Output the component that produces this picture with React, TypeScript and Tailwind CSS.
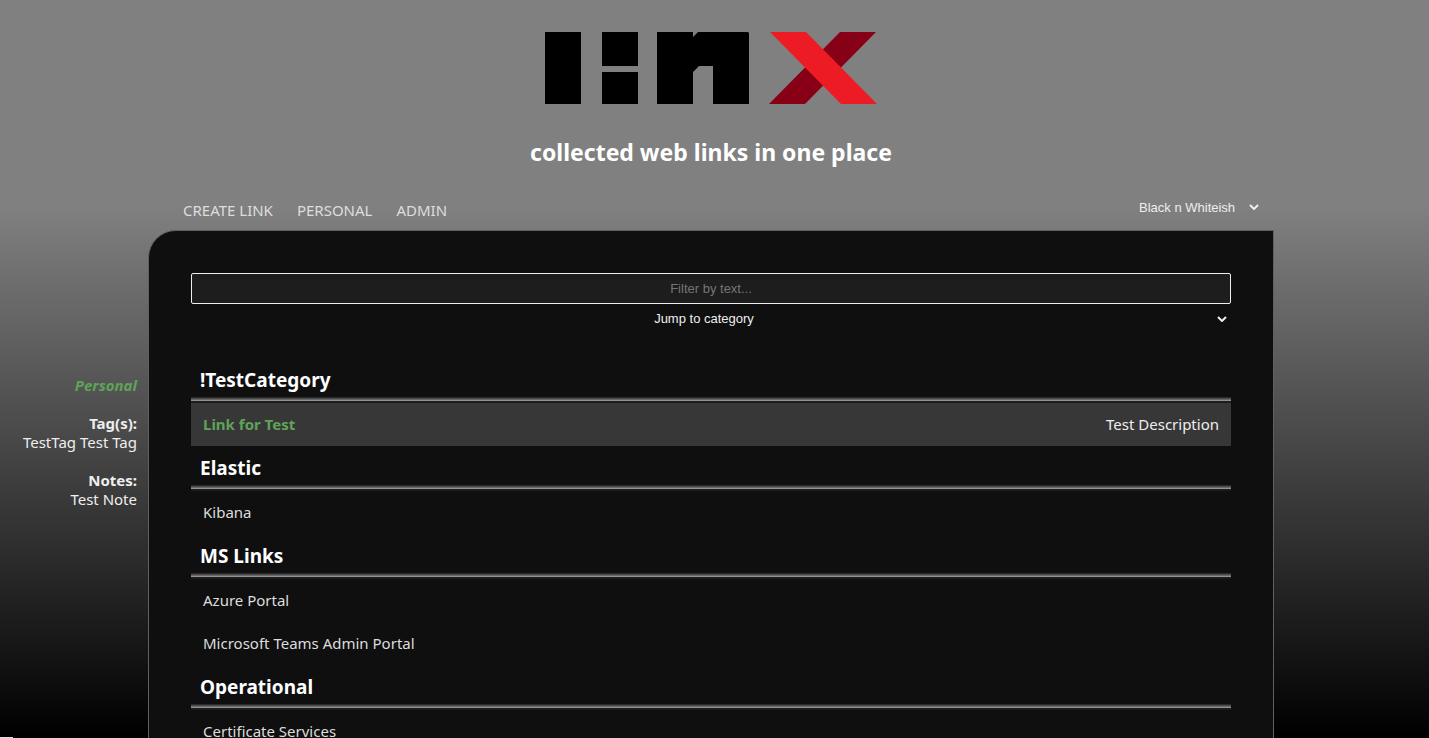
import React from 'react';

const categories = [
  { name: '!TestCategory', links: [{ title: 'Link for Test', description: 'Test Description', active: true }] },
  { name: 'Elastic', links: [{ title: 'Kibana', description: '', active: false }] },
  {
    name: 'MS Links',
    links: [
      { title: 'Azure Portal', description: '', active: false },
      { title: 'Microsoft Teams Admin Portal', description: '', active: false },
    ],
  },
  { name: 'Operational', links: [{ title: 'Certificate Services', description: '', active: false }] },
];

function Logo() {
  return (
    <svg role="img" aria-label="linx" width="332" height="72" viewBox="0 0 332 72">
      <path d="M0 0h36v72H0zM57 0h36v34H57zM57 40h36v32H57zM112 0h36v5l5-5h50l1 1v71h-36V34h-14l-6 6v32h-36z" fill="#000" />
      <path d="M295 0h36l-71 72h-36z" fill="#880015" />
      <path d="M225 0h36l71 72h-36z" fill="#ed1c24" />
    </svg>
  );
}

function Chevron() {
  return (
    <svg className="pointer-events-none" width="10" height="6" viewBox="0 0 10 6" fill="none" stroke="currentColor" strokeWidth="2" aria-hidden="true">
      <path d="M1 1l4 4 4-4" />
    </svg>
  );
}

export default function App() {
  return (
    <div className="relative h-screen overflow-hidden bg-[linear-gradient(#808080_28%,#000)] pr-[7px] font-['Trebuchet_MS','Noto_Sans',sans-serif] text-[15px] text-[#eee]">
      <header className="flex flex-col items-center pt-8">
        <Logo />
        <h1 className="mt-8 text-[23px] leading-8 font-bold text-white">collected web links in one place</h1>
      </header>
      <div className="grid grid-cols-[148px_minmax(0,1fr)_148px]">
        <div className="col-start-2 flex h-[62px] items-end justify-between pr-[15px] pl-[35px]">
          <nav className="flex gap-6 pb-[9px] text-[#ddd]">
            <a href="#create">CREATE LINK</a>
            <a href="#personal">PERSONAL</a>
            <a href="#admin">ADMIN</a>
          </nav>
          <div className="mb-[13px] flex items-center">
            <select aria-label="Theme" className="w-[110px] appearance-none bg-transparent font-['Liberation_Sans',sans-serif] text-[13px]">
              <option>Black n Whiteish</option>
            </select>
            <Chevron />
          </div>
        </div>
        <aside className="col-start-1 pt-[146px] pr-[11px] text-right leading-[19px]">
          <p className="mb-[19px] font-bold text-[#5ea358] italic">Personal</p>
          <h2 className="font-bold">Tag(s):</h2>
          <p className="mb-[19px]">TestTag Test Tag</p>
          <h2 className="font-bold">Notes:</h2>
          <p>Test Note</p>
        </aside>
        <main className="min-h-screen rounded-tl-[28px] border border-[#606060] bg-[#0f0f0f] px-[42px] pt-[42px]">
          <input
            aria-label="Filter by text"
            placeholder="Filter by text..."
            className="block h-[31px] w-full rounded-xs border border-[#eee] bg-[#1d1d1d] text-center font-['Liberation_Sans',sans-serif] text-[13px] placeholder:text-[#757575]"
          />
          <div className="flex h-[30px] items-center pr-1">
            <select aria-label="Category" className="min-w-0 flex-1 appearance-none bg-transparent text-center font-['Liberation_Sans',sans-serif] text-[13px]">
              <option>Jump to category</option>
            </select>
            <Chevron />
          </div>
          <div className="pt-6">
            {categories.map((category) => (
              <section key={category.name}>
                <h2 className="px-[9px] pt-[7px] pb-0.5 text-[19px] leading-[30px] font-bold text-white">{category.name}</h2>
                <div className="h-1.5 bg-[linear-gradient(#2a2a2a_1px,#484848_1px_2px,#686868_2px_3px,#929292_3px_4px,#1c1c1c_4px)]" />
                <ul>
                  {category.links.map((link) => (
                    <li
                      key={link.title}
                      className={link.active ? 'flex h-[43px] items-center justify-between bg-[#373737] px-3' : 'flex h-[43px] items-center justify-between px-3'}
                    >
                      <a href="#link" className={link.active ? 'font-bold text-[#5ea358]' : 'text-[#ddd]'}>{link.title}</a>
                      <span>{link.description}</span>
                    </li>
                  ))}
                </ul>
              </section>
            ))}
          </div>
        </main>
      </div>
      <div className="absolute bottom-0 left-0 h-px w-[13px] bg-[#ddd]" />
    </div>
  );
}
